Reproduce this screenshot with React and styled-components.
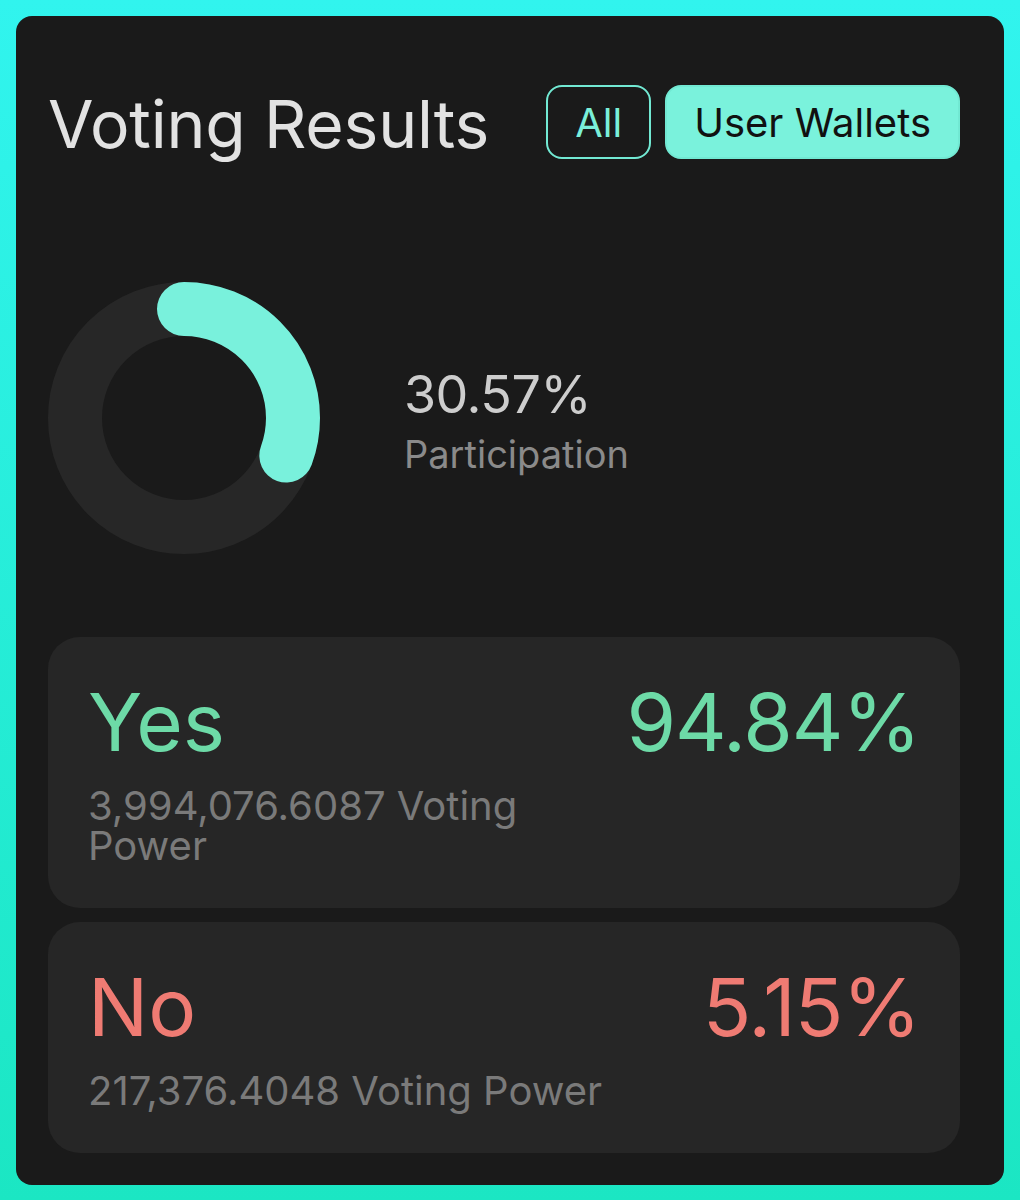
import React from 'react'
import styled, { createGlobalStyle } from 'styled-components'

const GlobalStyle = createGlobalStyle`
  * { box-sizing: border-box; }
  body {
    margin: 0;
    font-family: Inter, "Noto Sans", sans-serif;
    background: linear-gradient(180deg, #31f4ee 0%, #1be6c3 100%);
    min-height: 1200px;
  }
`

const results = [
  { label: 'Yes', percent: '94.84%', power: '3,994,076.6087 Voting Power', tone: 'yes' },
  { label: 'No', percent: '5.15%', power: '217,376.4048 Voting Power', tone: 'no' },
]

const tones = {
  yes: '#6ddaa7',
  no: '#ef7b73',
}

const Donut = ({ value }) => {
  const r = 109
  const c = 2 * Math.PI * r
  return (
    <svg width="272" height="272" viewBox="0 0 272 272">
      <circle cx="136" cy="136" r={r} fill="none" stroke="#272727" strokeWidth="54" />
      <circle
        cx="136"
        cy="136"
        r={r}
        fill="none"
        stroke="#79f1dc"
        strokeWidth="54"
        strokeLinecap="round"
        strokeDasharray={`${(c * value) / 100} ${c}`}
        transform="rotate(-90 136 136)"
      />
    </svg>
  )
}

const App = () => {
  return (
    <Page>
      <GlobalStyle />
      <Card>
        <Header>
          <Title>Voting Results</Title>
          <Toggle>
            <ToggleButton>All</ToggleButton>
            <ToggleButton active>User Wallets</ToggleButton>
          </Toggle>
        </Header>

        <ParticipationRow>
          <Donut value={30.57} />
          <ParticipationText>
            <ParticipationValue>30.57%</ParticipationValue>
            <ParticipationLabel>Participation</ParticipationLabel>
          </ParticipationText>
        </ParticipationRow>

        <ResultList>
          {results.map((item) => (
            <ResultCard key={item.label}>
              <ResultInfo>
                <ResultLabel tone={item.tone}>{item.label}</ResultLabel>
                <ResultPower>{item.power}</ResultPower>
              </ResultInfo>
              <ResultPercent tone={item.tone}>{item.percent}</ResultPercent>
            </ResultCard>
          ))}
        </ResultList>
      </Card>
    </Page>
  )
}

export default App

const Page = styled.div`
  padding: 16px;
`

const Card = styled.div`
  background-color: #1a1a1a;
  border-radius: 16px;
  padding: 32px 44px 32px 32px;
  min-height: 1168px;
`

const Header = styled.div`
  display: flex;
  align-items: center;
  justify-content: space-between;
  padding-top: 37px;
`

const Title = styled.h1`
  margin: 0;
  font-size: 66px;
  font-weight: 400;
  line-height: 1;
  color: #e2e2e2;
  letter-spacing: -0.2px;
  margin-top: 4px;
`

const Toggle = styled.div`
  display: flex;
  gap: 14px;
`

const ToggleButton = styled.button`
  height: 74px;
  padding: 0 27px;
  border-radius: 16px;
  border: 2.5px solid #72e9d3;
  background-color: ${(p) => (p.active ? '#7af2dc' : 'transparent')};
  color: ${(p) => (p.active ? '#111' : '#7aefd9')};
  font-family: Inter, sans-serif;
  font-size: 40px;
  font-weight: 400;
  cursor: pointer;
`

const ParticipationRow = styled.div`
  display: flex;
  align-items: center;
  gap: 84px;
  margin-top: 123px;
`

const ParticipationText = styled.div`
  display: flex;
  flex-direction: column;
  gap: 14px;
  padding-top: 6px;
`

const ParticipationValue = styled.div`
  font-size: 52px;
  line-height: 1;
  color: #cdcdcd;
  letter-spacing: -0.5px;
`

const ParticipationLabel = styled.div`
  font-size: 38px;
  line-height: 1;
  color: #8a8a8a;
`

const ResultList = styled.div`
  display: flex;
  flex-direction: column;
  gap: 14px;
  margin-top: 83px;
`

const ResultCard = styled.div`
  display: flex;
  justify-content: space-between;
  align-items: flex-start;
  gap: 24px;
  background-color: #262626;
  border-radius: 32px;
  padding: 45px 40px 42px 40px;
`

const ResultInfo = styled.div`
  flex: 1;
  display: flex;
  flex-direction: column;
  gap: 24px;
`

const ResultLabel = styled.div`
  font-size: 80px;
  line-height: 1;
  color: ${(p) => tones[p.tone]};
`

const ResultPercent = styled.div`
  font-size: 80px;
  line-height: 1;
  letter-spacing: -1px;
  color: ${(p) => tones[p.tone]};
`

const ResultPower = styled.div`
  font-size: 40px;
  line-height: 40px;
  color: #7a7a7a;
`
